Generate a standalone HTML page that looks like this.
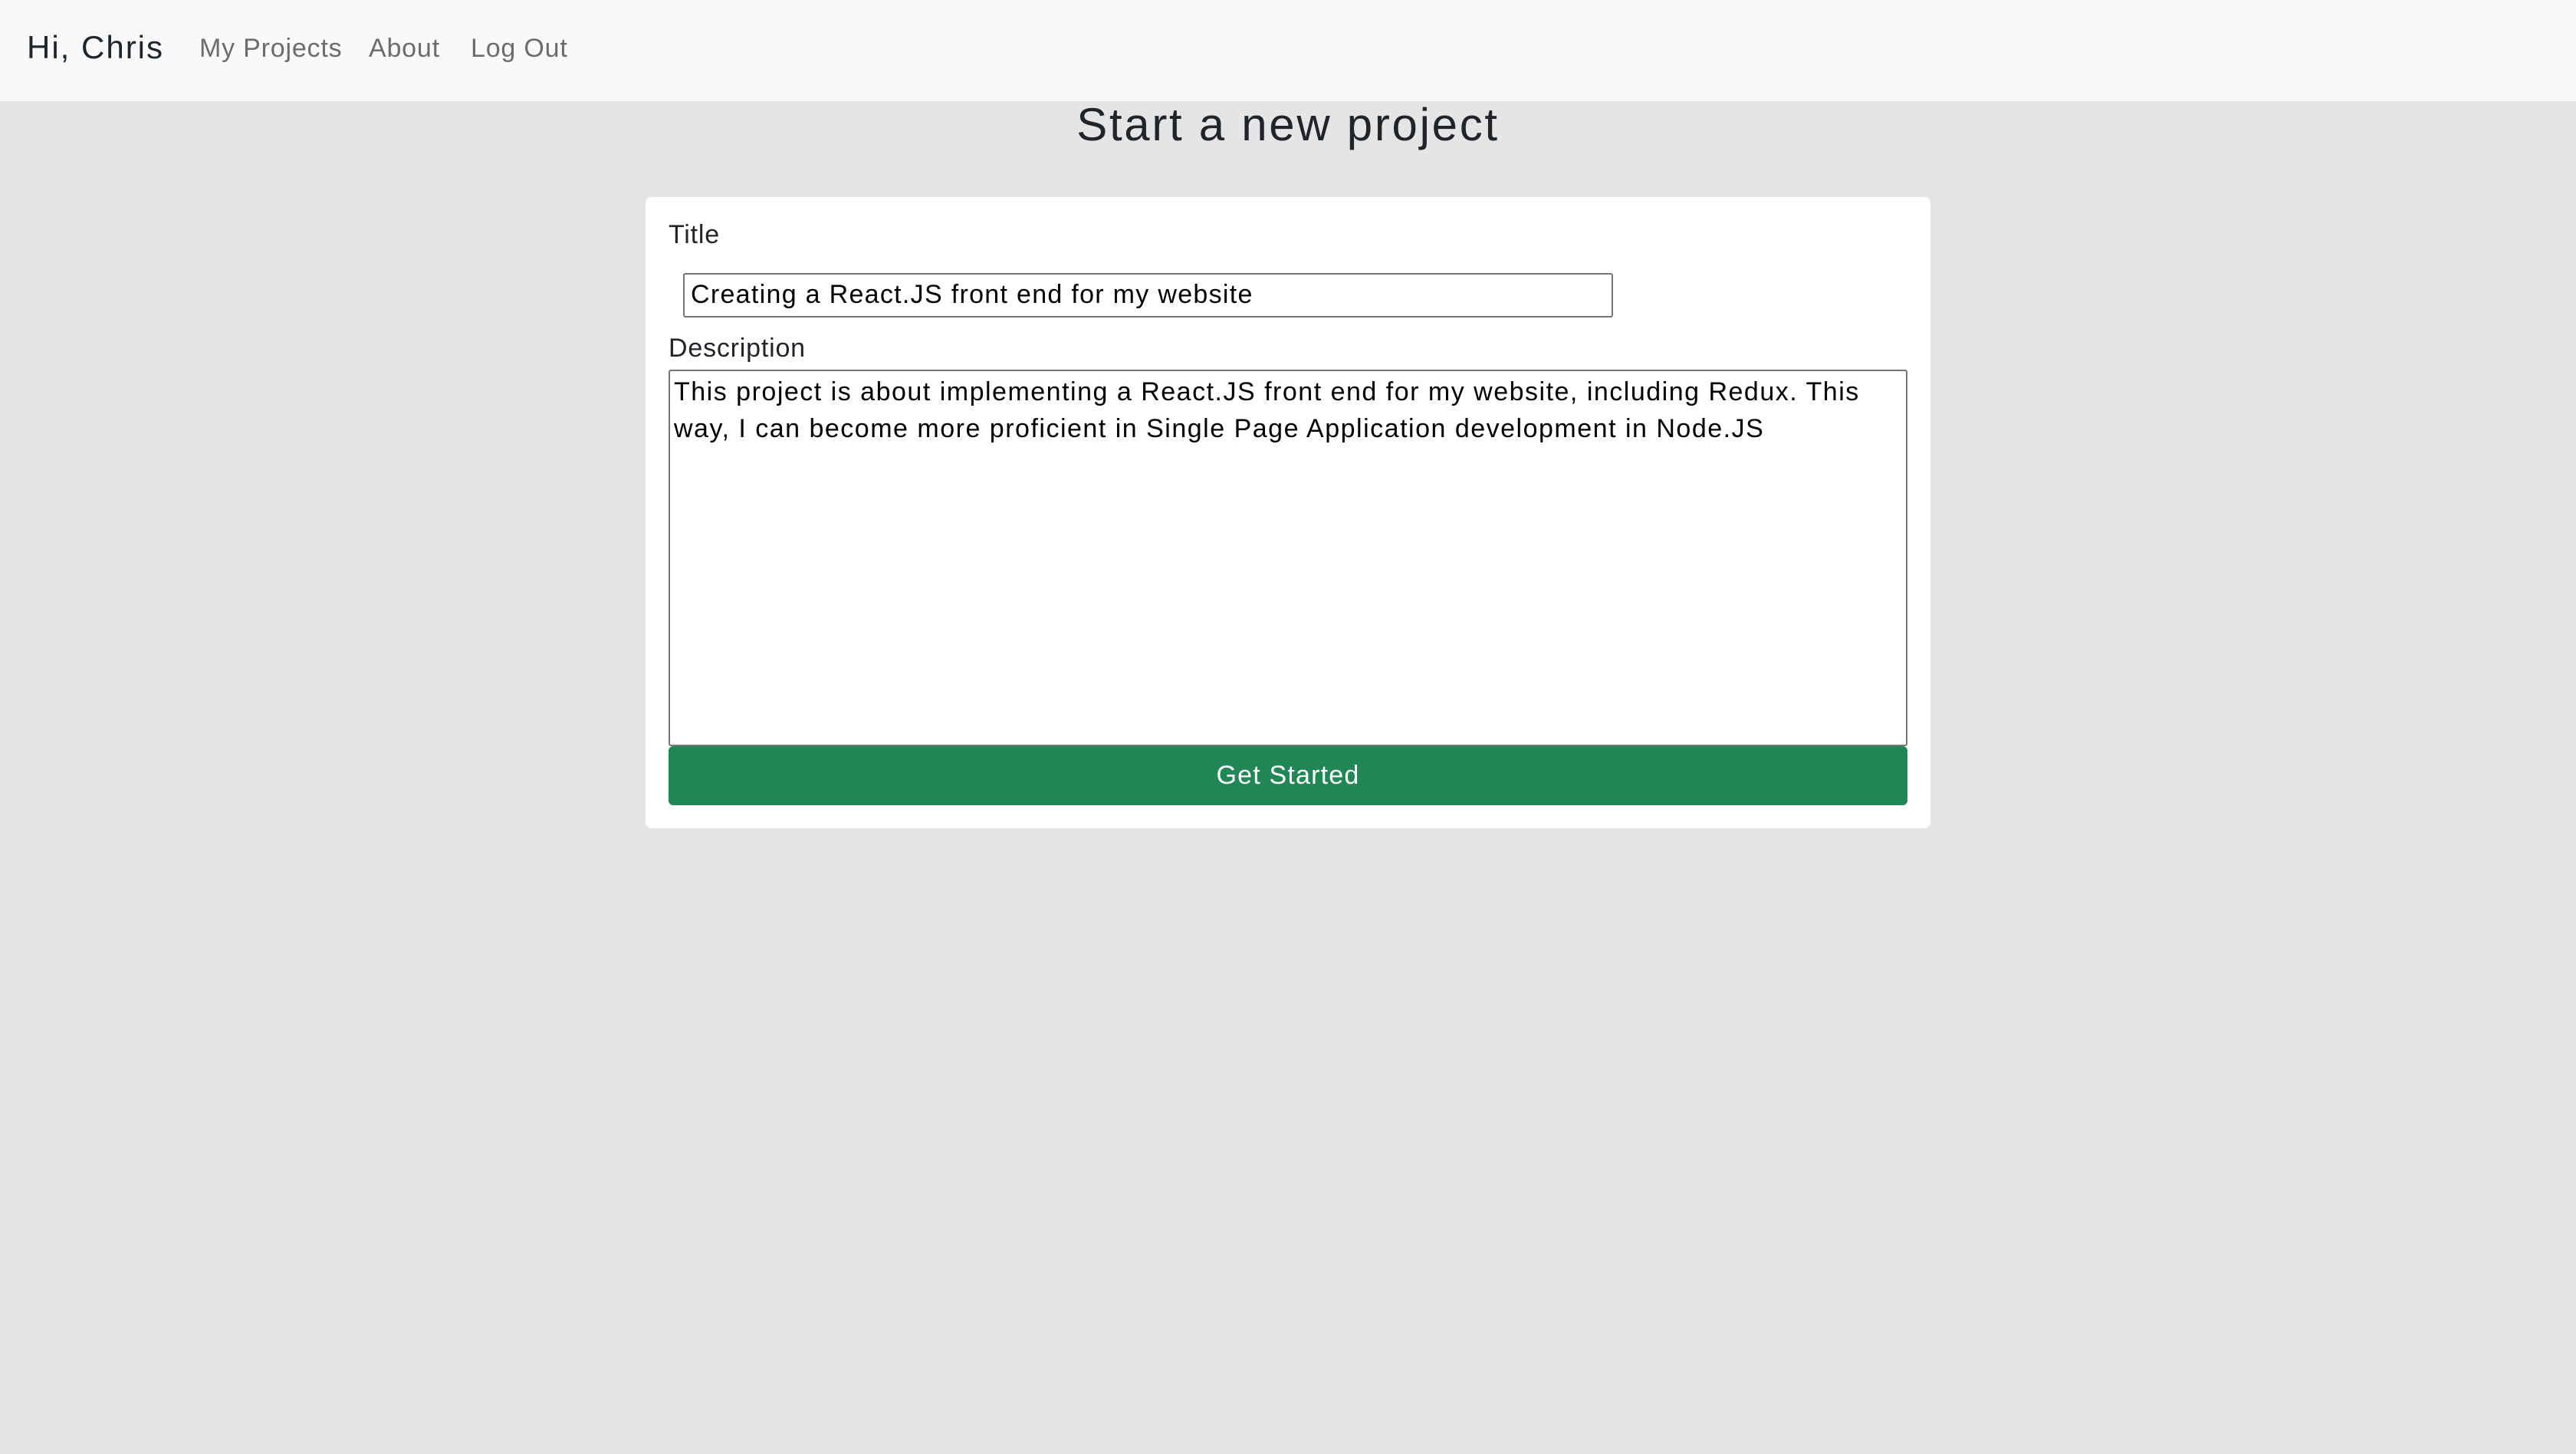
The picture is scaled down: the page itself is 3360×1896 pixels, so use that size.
<!DOCTYPE html>
<html><head><meta charset="utf-8"><style>
*{box-sizing:border-box;margin:0;padding:0}
html,body{width:3360px;height:1896px;background:#e5e5e5;font-family:"Liberation Sans",sans-serif;color:#212529;overflow:hidden}
.nav{position:absolute;left:0;top:0;width:3360px;height:132px;background:#f8f9fa}
.nav span{position:absolute;white-space:nowrap}
.brand{left:35px;top:38px;font-size:42px;color:#212529;letter-spacing:2px}
.link{top:44px;font-size:34px;color:#6c6c6c;letter-spacing:0.8px}
h1{position:absolute;left:0;width:3360px;text-align:center;top:128px;font-size:60px;font-weight:normal;color:#212529;letter-spacing:2.7px}
.card{position:absolute;left:842px;top:257px;width:1676px;height:823px;background:#fff;border-radius:8px}
.lbl{position:absolute;left:30px;font-size:34px;color:#212529;letter-spacing:0.8px}
.inp{position:absolute;left:49px;top:99px;width:1213px;height:58px;border:2px solid #767676;border-radius:3px;font-size:34px;padding:7px 8px;color:#000;white-space:nowrap;letter-spacing:1.3px}
.ta{position:absolute;left:30px;top:225px;width:1616px;height:491px;border:2px solid #767676;border-radius:3px;font-size:34px;line-height:48px;padding:3px 5px;color:#000;letter-spacing:1.5px}
.btn{position:absolute;left:30px;top:716px;width:1616px;height:77px;background:#218757;border-radius:6px;color:#fff;font-size:34px;text-align:center;line-height:77px;letter-spacing:1.2px}
</style></head><body>
<div class="nav">
<span class="brand">Hi, Chris</span>
<span class="link" style="left:260px">My Projects</span>
<span class="link" style="left:481px">About</span>
<span class="link" style="left:614px">Log Out</span>
</div>
<h1>Start a new project</h1>
<div class="card">
<div class="lbl" style="top:30px">Title</div>
<div class="inp">Creating a React.JS front end for my website</div>
<div class="lbl" style="top:178px">Description</div>
<div class="ta">This project is about implementing a React.JS front end for my website, including Redux. This way, I can become more proficient in Single Page Application development in Node.JS</div>
<div class="btn">Get Started</div>
</div>
</body></html>
